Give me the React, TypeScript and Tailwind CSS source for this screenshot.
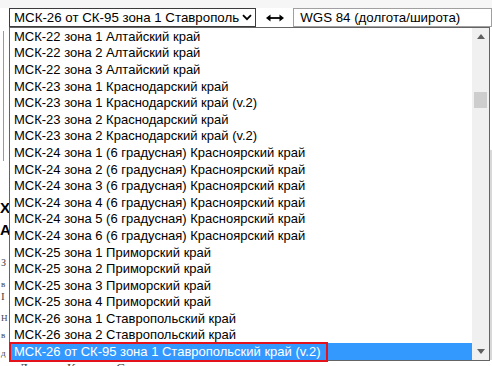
import React from "react";

const items = [
  "МСК-22 зона 1 Алтайский край",
  "МСК-22 зона 2 Алтайский край",
  "МСК-22 зона 3 Алтайский край",
  "МСК-23 зона 1 Краснодарский край",
  "МСК-23 зона 1 Краснодарский край (v.2)",
  "МСК-23 зона 2 Краснодарский край",
  "МСК-23 зона 2 Краснодарский край (v.2)",
  "МСК-24 зона 1 (6 градусная) Красноярский край",
  "МСК-24 зона 2 (6 градусная) Красноярский край",
  "МСК-24 зона 3 (6 градусная) Красноярский край",
  "МСК-24 зона 4 (6 градусная) Красноярский край",
  "МСК-24 зона 5 (6 градусная) Красноярский край",
  "МСК-24 зона 6 (6 градусная) Красноярский край",
  "МСК-25 зона 1 Приморский край",
  "МСК-25 зона 2 Приморский край",
  "МСК-25 зона 3 Приморский край",
  "МСК-25 зона 4 Приморский край",
  "МСК-26 зона 1 Ставропольский край",
  "МСК-26 зона 2 Ставропольский край",
  "МСК-26 от СК-95 зона 1 Ставропольский край (v.2)",
];

const serif = { fontFamily: '"Liberation Serif", serif' };

export default function App() {
  return (
    <div
      className="relative w-[492px] h-[366px] overflow-hidden bg-white text-black"
      style={{ fontFamily: '"Liberation Sans", Arial, sans-serif' }}
    >
      {/* page behind the open list */}
      <div className="absolute inset-0 flex flex-col bg-white">
        <div className="h-[8px] bg-[#f6f6f6]" />
        <div className="flex flex-1">
          <div className="w-[9px] flex flex-col text-[#444]">
            <div className="mt-[23px] ml-[3px] w-[1px] h-[130px] bg-[#9a9a9a]" />
            <div className="mt-[39px] text-[15px] font-bold leading-none text-black">Х</div>
            <div className="mt-[7px] text-[15px] font-bold leading-none text-black">А</div>
            <div className="mt-[21px] ml-[1px] text-[10px] leading-none" style={serif}>З</div>
            <div className="mt-[12px] ml-[1px] text-[9px] leading-none" style={serif}>в</div>
            <div className="mt-[2px] ml-[1px] text-[11px] leading-none" style={serif}>I</div>
            <div className="mt-[12px] ml-[1px] text-[9px] leading-none" style={serif}>Н</div>
            <div className="mt-[8px] ml-[1px] text-[9px] leading-none" style={serif}>в</div>
            <div className="mt-[9px] ml-[1px] text-[9px] leading-none" style={serif}>д</div>
          </div>
          <div className="flex-1 flex flex-col justify-end">
            <div className="h-[5px] overflow-hidden pl-[10px] text-[13px] leading-[13px] text-[#444]" style={serif}>
              Долгота Колонка Ставрополь
            </div>
          </div>
          <div className="w-[2px] mt-[142px] mb-[6px] bg-[#d8d8d8]" />
        </div>
      </div>

      {/* top row */}
      <div className="relative flex items-center pt-[8px] pl-[9px]">
        <div className="flex items-center w-[249px] h-[19px] border border-[#3c3c3c] bg-white pl-[4px] pr-[3px] text-[13.3px] leading-none">
          <span className="flex-1 whitespace-nowrap">МСК-26 от СК-95 зона 1 Ставрополь</span>
          <svg width="10" height="7" viewBox="0 0 10 7" className="ml-[2px]">
            <path d="M1 1.2 L5 5.2 L9 1.2" fill="none" stroke="#000" strokeWidth="1.8" />
          </svg>
        </div>
        <div className="w-[37px] flex justify-center">
          <svg width="18" height="8" viewBox="0 0 18 8">
            <path d="M3 4 H15" stroke="#000" strokeWidth="1.8" />
            <path d="M0 4 L4.5 0.5 L4.5 7.5 Z" fill="#000" />
            <path d="M18 4 L13.5 0.5 L13.5 7.5 Z" fill="#000" />
          </svg>
        </div>
        <div className="flex items-center w-[200px] h-[19px] border border-[#a0a0a0] bg-white pl-[6px] text-[13.3px] leading-none whitespace-nowrap">
          WGS 84 (долгота/широта)
        </div>
      </div>

      {/* open dropdown list (overlay) */}
      <div className="absolute left-[9px] top-[27px] w-[481px] h-[334px] border border-[#646464] bg-white flex">
        <div className="flex-1 flex flex-col">
          {items.map((t, i) => {
            const sel = i === items.length - 1;
            return (
              <div
                key={i}
                className={
                  "relative h-[16.6px] flex items-center pl-[4px] text-[13px] leading-none whitespace-nowrap " +
                  (sel ? "bg-[#3399ff] text-white" : "")
                }
              >
                {t}
                {sel && (
                  <div className="absolute left-[-1px] top-[-1px] w-[319px] h-[20px] border-2 border-[#e3121b]" />
                )}
              </div>
            );
          })}
        </div>
        <div className="w-[17px] bg-[#f0f0f0] flex flex-col items-center">
          <div className="h-[17px] flex items-center justify-center">
            <svg width="8" height="5" viewBox="0 0 8 5">
              <path d="M0 5 L4 0 L8 5 Z" fill="#606060" />
            </svg>
          </div>
          <div className="mt-[47px] w-[13px] h-[16px] bg-[#cdcdcd]" />
          <div className="flex-1" />
          <div className="h-[17px] flex items-center justify-center">
            <svg width="8" height="5" viewBox="0 0 8 5">
              <path d="M0 0 L4 5 L8 0 Z" fill="#606060" />
            </svg>
          </div>
        </div>
      </div>
    </div>
  );
}
